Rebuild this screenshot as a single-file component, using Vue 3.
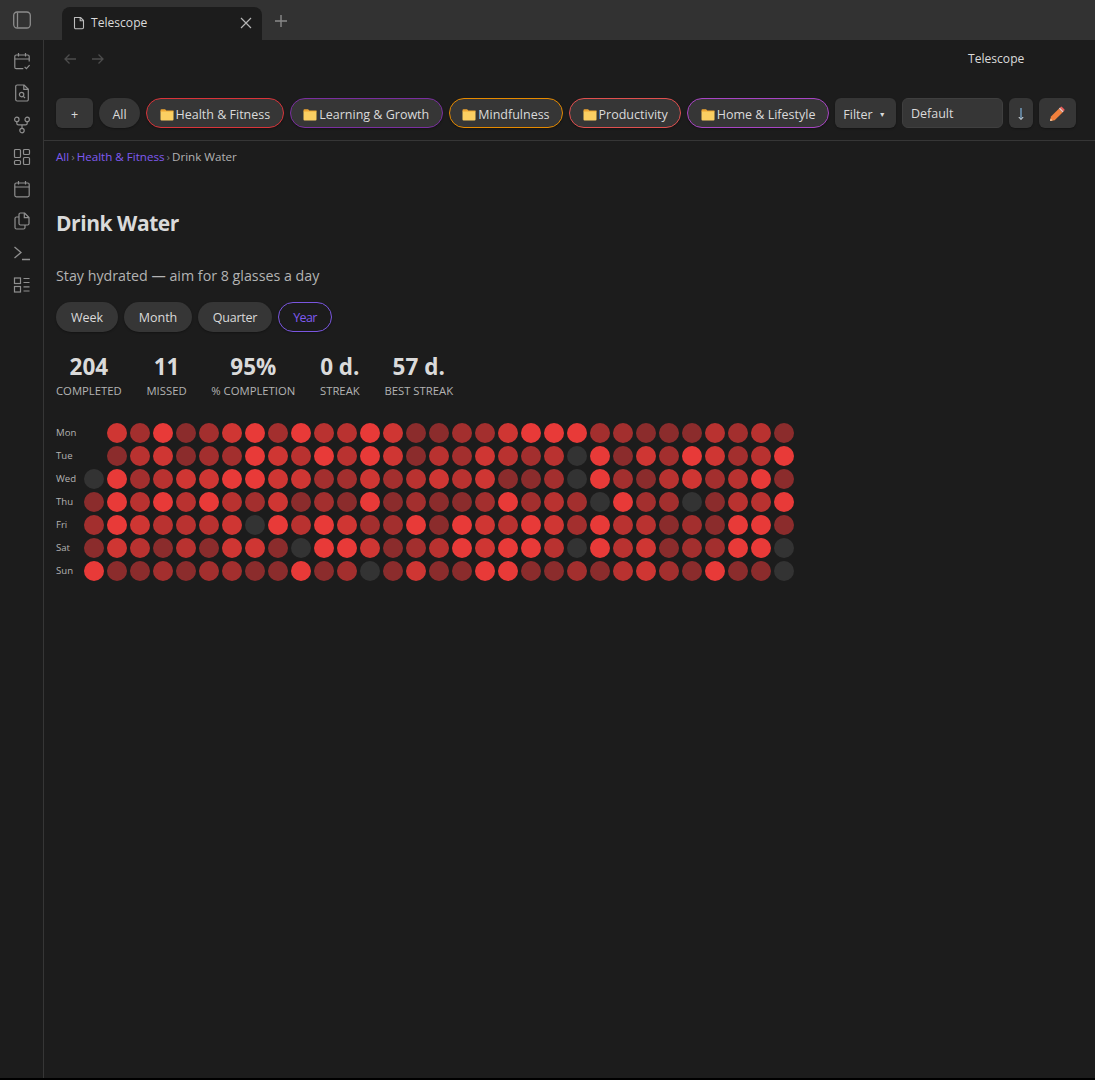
<script setup>
import { ref } from 'vue';

const folders = [
  { name: 'Health & Fitness', color: '#d9343a' },
  { name: 'Learning & Growth', color: '#7b2fa0' },
  { name: 'Mindfulness', color: '#e68a00' },
  { name: 'Productivity', color: '#e0504f' },
  { name: 'Home & Lifestyle', color: '#a845c4' },
];

const ranges = ['Week', 'Month', 'Quarter', 'Year'];
const activeRange = ref('Year');

const stats = [
  { value: '204', label: 'COMPLETED' },
  { value: '11', label: 'MISSED' },
  { value: '95%', label: '% COMPLETION' },
  { value: '0 d.', label: 'STREAK' },
  { value: '57 d.', label: 'BEST STREAK' },
];

// one string per weekday, one char per week: . nothing, 0 missed, 1-5 intensity
const rows = [
  { day: 'Mon', cells: '.425124525' + '3354112245' + '55221113231' },
  { day: 'Tue', cells: '.134122543' + '5354132432' + '30514254235' },
  { day: 'Wed', cells: '0523445544' + '2242343411' + '20521342351' },
  { day: 'Thu', cells: '1535353241' + '2151211252' + '32052201335' },
  { day: 'Fri', cells: '2543334053' + '5422515435' + '42533121551' },
  { day: 'Sat', cells: '1431314410' + '5541235455' + '30534122550' },
  { day: 'Sun', cells: '5112122115' + '1201411551' + '12134215110' },
];
</script>

<template>
  <div class="app">
    <header class="tabbar">
      <div class="tabbar-left">
        <svg class="icon" width="18" height="18" viewBox="0 0 18 18" fill="none" stroke="#8c8c8c" stroke-width="1.3">
          <rect x="0.7" y="1" width="16.6" height="16" rx="3.5" />
          <path d="M4.5 1.5v15" />
        </svg>
      </div>
      <div class="tab">
        <svg width="14" height="14" viewBox="0 0 14 14" fill="none" stroke="#bdbdbd" stroke-width="1.1">
          <path d="M2.5 1.5h6l3 3v7a1.2 1.2 0 0 1-1.2 1.2H3.7a1.2 1.2 0 0 1-1.2-1.2z" stroke-linejoin="round" />
          <path d="M8.2 1.5v3.2h3.3" />
        </svg>
        <span class="tab-title">Telescope</span>
        <svg class="tab-close" width="12" height="12" viewBox="0 0 12 12" fill="none" stroke="#b5b5b5" stroke-width="1.2">
          <path d="M1 1l10 10M11 1L1 11" />
        </svg>
      </div>
      <svg class="tab-new" width="14" height="14" viewBox="0 0 14 14" fill="none" stroke="#8a8a8a" stroke-width="1.4">
        <path d="M7 1v12M1 7h12" />
      </svg>
    </header>

    <div class="workspace">
      <aside class="sidebar">
        <!-- calendar with check -->
        <svg width="18" height="18" viewBox="0 0 18 18" fill="none" stroke="#8f8f8f" stroke-width="1.2">
          <path d="M16.2 9.5V4.5a1.5 1.5 0 0 0-1.5-1.5H3.3a1.5 1.5 0 0 0-1.5 1.5v10.7a1.5 1.5 0 0 0 1.5 1.5h7" />
          <path d="M5.5 1v3.5M12.5 1v3.5M1.8 7h14.4M11.6 14.8l1.8 1.8 3.2-3.4" />
        </svg>
        <!-- file search -->
        <svg width="18" height="18" viewBox="0 0 18 18" fill="none" stroke="#8f8f8f" stroke-width="1.2">
          <path d="M11 1H4.2a1.5 1.5 0 0 0-1.5 1.5v13a1.5 1.5 0 0 0 1.5 1.5h9.6a1.5 1.5 0 0 0 1.5-1.5V5.2z" stroke-linejoin="round" />
          <path d="M10.8 1v4.4h4.5" />
          <circle cx="8.6" cy="10.6" r="2.2" />
          <path d="M10.3 12.3l1.7 1.7" />
        </svg>
        <!-- graph -->
        <svg width="18" height="18" viewBox="0 0 18 18" fill="none" stroke="#8f8f8f" stroke-width="1.2">
          <circle cx="3.8" cy="3.4" r="2.2" />
          <circle cx="14.2" cy="3.4" r="2.2" />
          <circle cx="9" cy="14.6" r="2.2" />
          <path d="M3.8 5.6v1.6q0 1.6 1.6 1.6h7.2q1.6 0 1.6-1.6V5.6M9 8.8v3.6" />
        </svg>
        <!-- dashboard -->
        <svg width="18" height="18" viewBox="0 0 18 18" fill="none" stroke="#8f8f8f" stroke-width="1.2">
          <rect x="1.5" y="1.5" width="6" height="8" rx="1" />
          <rect x="10.5" y="1.5" width="6" height="5" rx="1" />
          <rect x="1.5" y="12.5" width="6" height="4" rx="1" />
          <rect x="10.5" y="9.5" width="6" height="7" rx="1" />
        </svg>
        <!-- calendar -->
        <svg width="18" height="18" viewBox="0 0 18 18" fill="none" stroke="#8f8f8f" stroke-width="1.2">
          <rect x="1.8" y="3" width="14.4" height="13.8" rx="1.5" />
          <path d="M5.5 1v3.5M12.5 1v3.5M1.8 7h14.4" />
        </svg>
        <!-- copy -->
        <svg width="18" height="18" viewBox="0 0 18 18" fill="none" stroke="#8f8f8f" stroke-width="1.2">
          <path d="M11.5 1H7.5A1.5 1.5 0 0 0 6 2.5v9A1.5 1.5 0 0 0 7.5 13h7a1.5 1.5 0 0 0 1.5-1.5V5.5z" stroke-linejoin="round" />
          <path d="M11.3 1v4.6H16" />
          <path d="M6 5H3.5A1.5 1.5 0 0 0 2 6.5v9A1.5 1.5 0 0 0 3.5 17h7a1.5 1.5 0 0 0 1.5-1.5V13" />
        </svg>
        <!-- terminal -->
        <svg width="18" height="18" viewBox="0 0 18 18" fill="none" stroke="#8f8f8f" stroke-width="1.3">
          <path d="M1.5 3l6.5 5.5L1.5 14M9 15.5h8" />
        </svg>
        <!-- checklist -->
        <svg width="18" height="18" viewBox="0 0 18 18" fill="none" stroke="#8f8f8f" stroke-width="1.2">
          <rect x="1.5" y="2" width="6" height="5.5" />
          <rect x="1.5" y="10.5" width="6" height="5.5" />
          <path d="M10.5 2.5h6M10.5 6.5h6M10.5 10.8h6M10.5 15h6" />
        </svg>
      </aside>

      <main class="main">
        <div class="nav-row">
          <svg width="14" height="12" viewBox="0 0 14 12" fill="none" stroke="#4c4c4c" stroke-width="1.3">
            <path d="M13 6H2M6.5 1.5L2 6l4.5 4.5" />
          </svg>
          <svg width="14" height="12" viewBox="0 0 14 12" fill="none" stroke="#4c4c4c" stroke-width="1.3">
            <path d="M1 6h11M7.5 1.5L12 6l-4.5 4.5" />
          </svg>
          <span class="nav-title">Telescope</span>
        </div>

        <div class="toolbar">
          <button class="btn btn-add">+</button>
          <button class="btn pill pill-all">All</button>
          <button
            v-for="folder in folders"
            :key="folder.name"
            class="btn pill folder-pill"
            :style="{ borderColor: folder.color }"
          >
            <svg class="folder-icon" width="14" height="13" viewBox="0 0 14 13">
              <path d="M0.5 2.2a1 1 0 0 1 1-1h3.6l1.2 1.4h7.2v1.5h-13z" fill="#eea733" />
              <path d="M0.5 3.6h13v7.8a1 1 0 0 1-1 1h-11a1 1 0 0 1-1-1z" fill="#fbcf62" />
            </svg>
            {{ folder.name }}
          </button>
          <button class="btn btn-filter">Filter <span class="caret">▼</span></button>
          <div class="select-box">Default</div>
          <button class="btn btn-sort">
            <svg width="8" height="14" viewBox="0 0 8 14" fill="none">
              <path d="M4 1v11" stroke="#7fb2dc" stroke-width="1.2" />
              <path d="M1.8 10l2.2 2.6L6.2 10" stroke="#dfe8ef" stroke-width="1" />
            </svg>
          </button>
          <button class="btn btn-edit">
            <svg width="16" height="16" viewBox="0 0 16 16">
              <path d="M1 15l1-4.5 7.8-7.8 3.7 3.7-7.8 7.8z" fill="#f0803c" />
              <path d="M9.8 2.7l1.2-1.2 3.7 3.7-1.2 1.2z" fill="#f3c6bd" />
              <path d="M11 1.5l.6-.6a1 1 0 0 1 1.4 0l2.3 2.3a1 1 0 0 1 0 1.4l-.6.6z" fill="#ee5f5b" />
              <path d="M1 15l.6-2.6 2 2z" fill="#f4c9a0" />
            </svg>
          </button>
        </div>

        <nav class="crumbs">
          <a>All</a><span class="sep">›</span><a>Health &amp; Fitness</a><span class="sep">›</span><span class="crumb-current">Drink Water</span>
        </nav>

        <h1 class="title">Drink Water</h1>
        <p class="desc">Stay hydrated — aim for 8 glasses a day</p>

        <div class="ranges">
          <button
            v-for="range in ranges"
            :key="range"
            class="btn pill range"
            :class="{ active: activeRange === range }"
            @click="activeRange = range"
          >
            {{ range }}
          </button>
        </div>

        <div class="stats">
          <div v-for="stat in stats" :key="stat.label" class="stat">
            <div class="stat-value">{{ stat.value }}</div>
            <div class="stat-label">{{ stat.label }}</div>
          </div>
        </div>

        <div class="heatmap">
          <div v-for="row in rows" :key="row.day" class="heat-row">
            <span class="day">{{ row.day }}</span>
            <span
              v-for="(cell, i) in row.cells"
              :key="i"
              class="dot"
              :class="'lvl-' + (cell === '.' ? 'none' : cell)"
            ></span>
          </div>
        </div>
      </main>
    </div>
    <div class="bottom-edge"></div>
  </div>
</template>

<style>
html,
body {
  margin: 0;
  background: #1c1c1c;
}
</style>

<style scoped>
.app {
  height: 1080px;
  display: flex;
  flex-direction: column;
  background: #1c1c1c;
  color: #dadada;
  font-family: "Open Sans", "Noto Sans", sans-serif;
  font-size: 13px;
  overflow: hidden;
}

.tabbar {
  height: 40px;
  flex: none;
  display: flex;
  align-items: flex-end;
  background: #323232;
}

.tabbar-left {
  width: 44px;
  height: 40px;
  margin-right: 18px;
  display: flex;
  align-items: center;
  justify-content: center;
}

.tab {
  width: 200px;
  height: 33px;
  box-sizing: border-box;
  padding: 0 10px 2px;
  display: flex;
  align-items: center;
  gap: 5px;
  background: #1c1c1c;
  border-radius: 8px 8px 0 0;
}

.tab-title {
  flex: 1;
  font-size: 12.1px;
  color: #dadada;
}

.tab-new {
  margin: 0 0 12px 12px;
}

.workspace {
  flex: 1;
  display: flex;
  min-height: 0;
}

.sidebar {
  width: 43px;
  flex: none;
  border-right: 1px solid #363636;
  padding-top: 12px;
  display: flex;
  flex-direction: column;
  align-items: center;
  gap: 14px;
}

.main {
  flex: 1;
  min-width: 0;
}

.nav-row {
  height: 38px;
  display: flex;
  align-items: center;
  padding-left: 19px;
  padding-bottom: 2px;
  box-sizing: border-box;
  gap: 14px;
}

.nav-row svg {
  margin-top: 2px;
}

.nav-title {
  margin-left: 849px;
  font-size: 12.1px;
  color: #dadada;
}

.toolbar {
  margin-top: 20px;
  padding: 0 12px 12px;
  display: flex;
  align-items: center;
  gap: 6px;
  border-bottom: 1px solid #363636;
}

.btn {
  height: 30px;
  box-sizing: border-box;
  border: none;
  background: #363636;
  color: #dadada;
  font: inherit;
  font-size: 12.5px;
  padding: 2px 0 0;
  display: inline-flex;
  align-items: center;
  justify-content: center;
  border-radius: 6px;
  box-shadow: 0 1px 2px rgba(0, 0, 0, 0.3);
}

.pill {
  border-radius: 15px;
}

.btn-add {
  width: 37px;
}

.pill-all {
  width: 41px;
}

.folder-pill {
  border: 1px solid;
  padding: 2px 12.5px 0;
  gap: 2px;
}

.btn-filter {
  width: 61px;
  gap: 6px;
  padding-right: 2px;
}

.caret {
  font-size: 7px;
}

.select-box {
  width: 101px;
  height: 30px;
  box-sizing: border-box;
  padding-left: 8px;
  line-height: 30px;
  font-size: 12.5px;
  color: #dadada;
  background: #363636;
  border: 1px solid #3f3f3f;
  border-radius: 6px;
}

.btn-sort {
  width: 24px;
}

.btn-edit {
  width: 37px;
}

.crumbs {
  padding: 8px 12px 0;
  font-size: 11.6px;
  line-height: 16px;
  color: #b3b3b3;
}

.crumbs a {
  color: #7f5af0;
}

.sep {
  margin: 0 2px;
  color: #777777;
}

.title {
  margin: 44px 0 0 12px;
  font-size: 21px;
  line-height: 28px;
  font-weight: 700;
  letter-spacing: -0.45px;
  color: #dadada;
}

.desc {
  margin: 29px 0 0 12px;
  font-size: 14.25px;
  line-height: 20px;
  color: #b3b3b3;
}

.ranges {
  margin: 16px 0 0 12px;
  display: flex;
  gap: 6px;
}

.range {
  width: 62px;
  padding-top: 1px;
}

.range:nth-child(2) {
  width: 68px;
}

.range:nth-child(3) {
  width: 74px;
  letter-spacing: -0.25px;
}

.range:nth-child(4) {
  width: 54px;
  letter-spacing: -0.6px;
}

.range.active {
  background: transparent;
  border: 1px solid #7a56e0;
  color: #7f5af0;
}

.stats {
  margin: 20px 0 0 12px;
  display: flex;
  gap: 24.7px;
}

.stat {
  display: flex;
  flex-direction: column;
  align-items: center;
}

.stat-value {
  font-size: 22.5px;
  line-height: 30px;
  font-weight: 700;
  color: #dadada;
}

.stat-label {
  margin-top: 1px;
  font-size: 11.3px;
  line-height: 16px;
  color: #b3b3b3;
}

.heatmap {
  margin: 24px 0 0 12px;
  display: flex;
  flex-direction: column;
  gap: 3px;
}

.heat-row {
  display: flex;
  align-items: center;
  gap: 3px;
  height: 20px;
}

.day {
  width: 25px;
  padding-bottom: 2px;
  font-size: 9.6px;
  color: #b3b3b3;
}

.dot {
  width: 20px;
  height: 20px;
  border-radius: 50%;
  flex: none;
}

.lvl-none {
  background: transparent;
}

.lvl-0 {
  background: #333333;
}

.lvl-1 {
  background: #8b2c2c;
}

.lvl-2 {
  background: #a32f2e;
}

.lvl-3 {
  background: #b93230;
}

.lvl-4 {
  background: #cf3633;
}

.lvl-5 {
  background: #e83a38;
}

.bottom-edge {
  height: 2px;
  flex: none;
  background: #000000;
}
</style>
